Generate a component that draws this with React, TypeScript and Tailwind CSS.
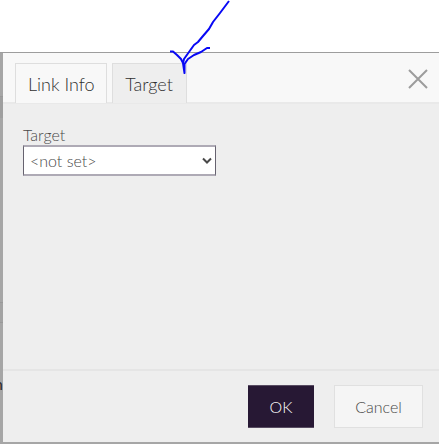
import { useState } from 'react';

const tabs = ['Link Info', 'Target'];

export default function LinkDialog() {
  const [activeTab, setActiveTab] = useState('Target');

  return (
    <main className="relative flex h-[444px] w-[439px] flex-col overflow-hidden bg-white pt-[52px] font-['Lato',sans-serif] font-light">
      {/* Dimmed page that shows around the dialog */}
      <div className="flex flex-1 border-t border-[#9d9d9d] bg-[#a6a6a6] pb-[2px]">
        <div className="flex w-[3px] shrink-0 flex-col overflow-hidden">
          <div className="h-[44px] border-b border-[#999999]" />
          <div className="h-[21px] bg-[#9f9f9f]" />
          <div className="mt-[184px] h-[21px] border-y border-[#999999] bg-[#a3a3a3]" />
          <div className="mt-[49px] -ml-[6px] text-[16px] leading-[24px] font-normal text-[#2a2a2a]">n</div>
        </div>

        {/* Dialog */}
        <div className="flex flex-1 flex-col bg-[#eeeeee]">
          <header className="flex h-[51px] items-start justify-between border-b-2 border-[#e9e9e9] bg-[#f8f8f8] pr-[11px] pl-[12px]">
            <div className="flex gap-[5px] pt-[10px]">
              {tabs.map((tab) => (
                <button
                  key={tab}
                  type="button"
                  onClick={() => setActiveTab(tab)}
                  className={`h-[40px] border border-b-0 border-[#dedede] text-[18px] text-[#303030] ${
                    tab === activeTab ? 'w-[75px] bg-[#eeeeee] pr-[13px] pl-[12px]' : 'w-[92px] bg-[#f8f8f8] px-[12px]'
                  }`}
                >
                  <span className="block pt-px whitespace-nowrap">{tab}</span>
                </button>
              ))}
            </div>
            <button type="button" aria-label="Close" className="mt-[16px]">
              <svg width="20" height="20" viewBox="0 0 20 20" fill="none" stroke="#9c9c9c" strokeWidth="2">
                <path d="M1 1L19 19M19 1L1 19" />
              </svg>
            </button>
          </header>

          <section className="flex-1 px-[20px] pt-[20px]">
            <label htmlFor="target" className="block h-[20px] text-[16px] leading-[22px] text-[#484848]">
              Target
            </label>
            <div className="relative mt-px w-[193px]">
              <select
                id="target"
                className="block h-[31px] w-full appearance-none border-x border-y-2 border-x-[#66626f] border-y-[#aeaab5] bg-white px-[6px] text-[16px] text-[#484848]"
              >
                <option>&lt;not set&gt;</option>
              </select>
              <svg
                className="pointer-events-none absolute top-[12px] right-[4px]"
                width="10"
                height="8"
                viewBox="0 0 10 8"
                fill="none"
                stroke="#484848"
                strokeWidth="2"
              >
                <path d="M1 1.5L5 5.5L9 1.5" />
              </svg>
            </div>
          </section>

          <footer className="flex h-[73px] justify-end gap-[20px] border-t-2 border-[#e5e5e5] pt-[14px] pr-[16px] text-[16px]">
            <button type="button" className="h-[43px] w-[66px] border-y border-[#584c62] bg-[#271834] text-white">
              OK
            </button>
            <button type="button" className="h-[43px] w-[89px] border border-[#e0e0e0] bg-[#f5f5f5] text-[#484848]">
              Cancel
            </button>
          </footer>
        </div>
      </div>

      {/* Hand-drawn arrow pointing at the active tab */}
      <svg
        className="pointer-events-none absolute top-0 left-[160px]"
        width="90"
        height="90"
        fill="none"
        stroke="#0808f5"
        strokeWidth="2"
        strokeLinejoin="round"
      >
        <path d="M69 1L60 13L53 22L49 29L43 36L38 42L34 45L29 52L24 59L23 63" />
        <path d="M10 51.5H13L17 55L21 59L23 63L24.5 73V64L28 59L34 55L41 52L47 48H50" />
      </svg>
    </main>
  );
}
